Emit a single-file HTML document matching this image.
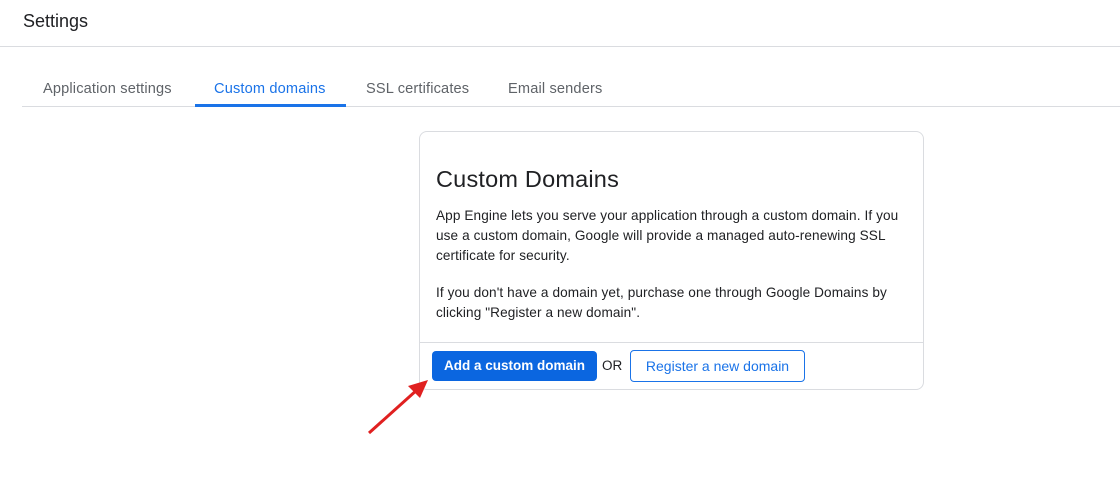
<!DOCTYPE html>
<html><head><style>
body{margin:0;width:1120px;height:478px;background:#fff;font-family:"Liberation Sans",sans-serif;position:relative;overflow:hidden;color:#202124}
.a{position:absolute;white-space:nowrap}
</style></head><body>
<div class="a" style="left:23px;top:11px;font-size:18px;color:#202124">Settings</div>
<div class="a" style="left:0;top:46px;width:1120px;height:1px;background:#dadce0"></div>
<div class="a" style="left:43px;top:81px;font-size:14.6px;letter-spacing:0.15px;color:#5f6368">Application settings</div>
<div class="a" style="left:214px;top:81px;font-size:14.6px;letter-spacing:0.15px;color:#1a73e8">Custom domains</div>
<div class="a" style="left:366px;top:81px;font-size:14.6px;letter-spacing:0.15px;color:#5f6368">SSL certificates</div>
<div class="a" style="left:508px;top:81px;font-size:14.6px;letter-spacing:0.15px;color:#5f6368">Email senders</div>
<div class="a" style="left:22px;top:106px;width:1098px;height:1px;background:#dadce0"></div>
<div class="a" style="left:195px;top:104px;width:151px;height:3px;background:#1a73e8"></div>
<div class="a" style="left:419px;top:131px;width:503px;height:257px;border:1px solid #dadce0;border-radius:8px"></div>
<div class="a" style="left:436px;top:166px;font-size:23.5px;letter-spacing:0.2px;color:#202124">Custom Domains</div>
<div class="a" style="left:436px;top:206px;font-size:13.6px;letter-spacing:0.1px;line-height:20px;color:#202124">App Engine lets you serve your application through a custom domain. If you<br>use a custom domain, Google will provide a managed auto-renewing SSL<br>certificate for security.</div>
<div class="a" style="left:436px;top:283px;font-size:13.6px;letter-spacing:0.1px;line-height:20px;color:#202124">If you don't have a domain yet, purchase one through Google Domains by<br>clicking "Register a new domain".</div>
<div class="a" style="left:420px;top:342px;width:503px;height:1px;background:#dadce0"></div>
<div class="a" style="left:432px;top:351px;width:165px;height:30px;background:#0b66e0;border-radius:4px;color:#fff;font-size:13.5px;font-weight:bold;line-height:30px;text-align:center">Add a custom domain</div>
<div class="a" style="left:602px;top:358px;font-size:13.5px;color:#202124">OR</div>
<div class="a" style="left:630px;top:350px;width:173px;height:30px;border:1px solid #1a73e8;border-radius:4px;color:#1a73e8;font-size:14px;line-height:30px;text-align:center">Register a new domain</div>
<svg class="a" style="left:0;top:0" width="1120" height="478"><line x1="369" y1="433" x2="418" y2="389" stroke="#e02020" stroke-width="3"/><polygon points="428,380 408,386 420,398" fill="#e02020"/></svg>
</body></html>
